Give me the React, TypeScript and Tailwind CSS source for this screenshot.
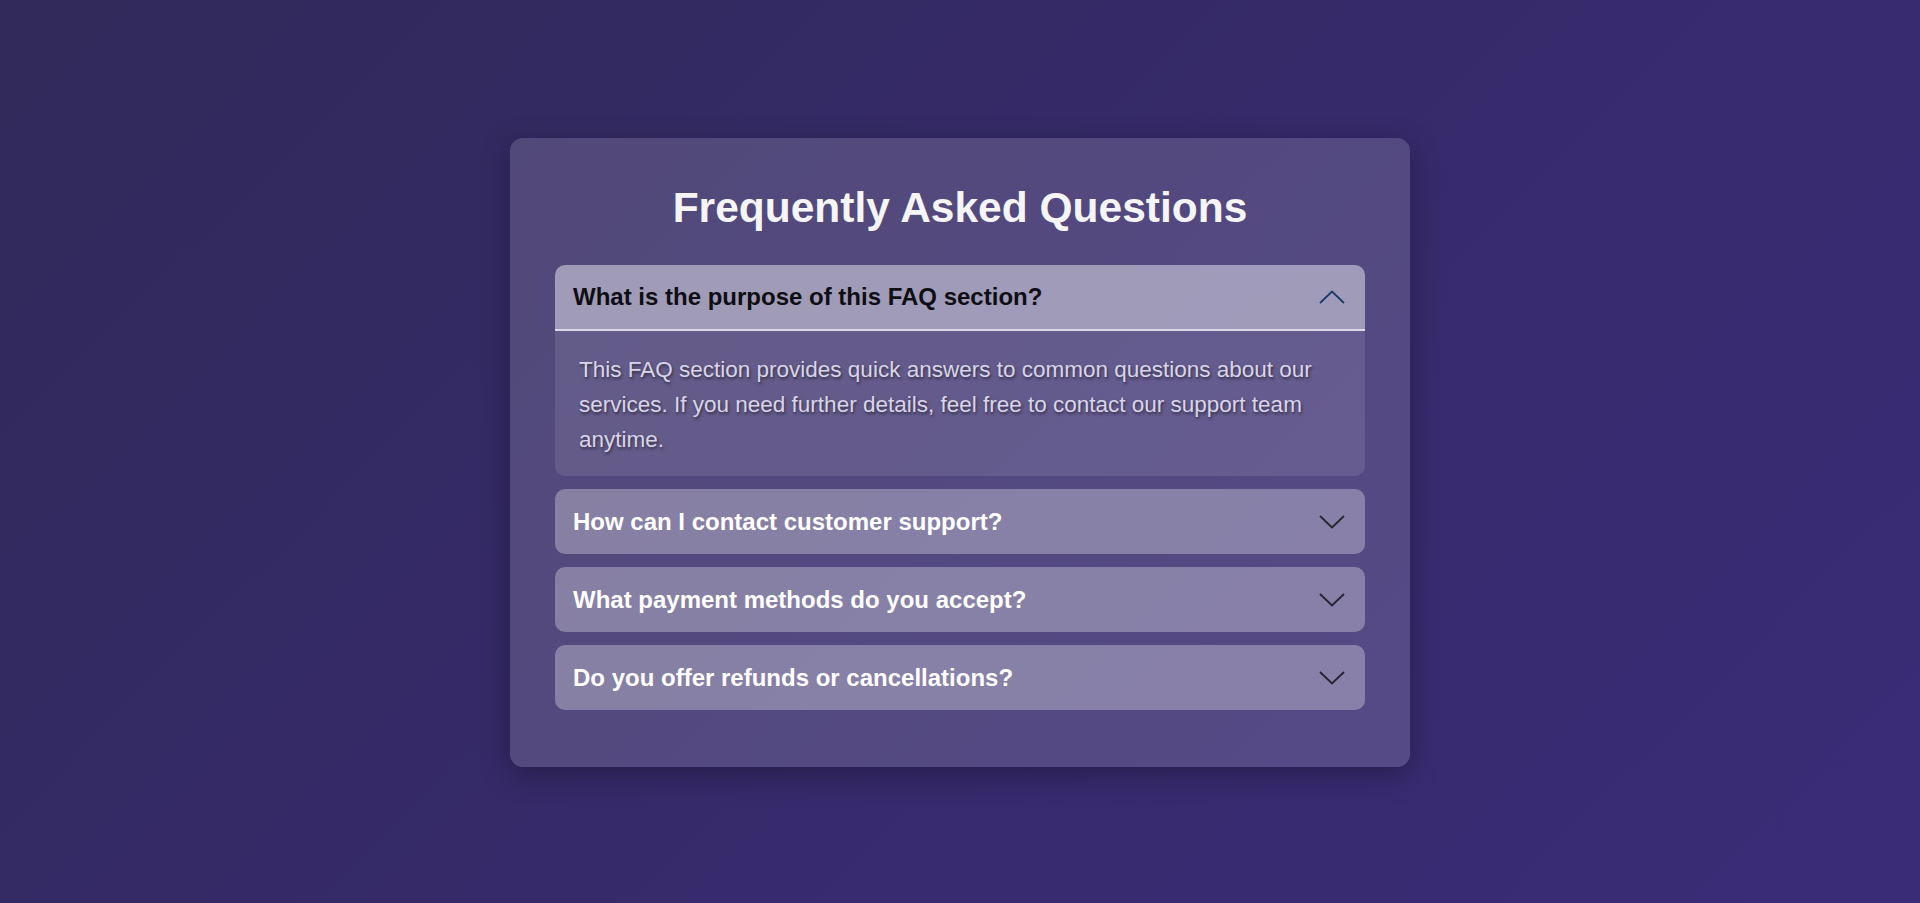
import React, { useState } from "react";

const faqs = [
  {
    q: "What is the purpose of this FAQ section?",
    a: "This FAQ section provides quick answers to common questions about our services. If you need further details, feel free to contact our support team anytime.",
  },
  {
    q: "How can I contact customer support?",
    a: "You can reach our customer support team via email or live chat, available 24/7 to help with any questions.",
  },
  {
    q: "What payment methods do you accept?",
    a: "We accept all major credit cards, PayPal, and bank transfers.",
  },
  {
    q: "Do you offer refunds or cancellations?",
    a: "Yes, refunds and cancellations are available within 30 days of purchase.",
  },
];

function Chevron({ up }: { up: boolean }) {
  return (
    <svg width="26" height="14" viewBox="0 0 26 14" fill="none" className="shrink-0">
      {up ? (
        <polyline points="1,13 13,1.5 25,13" stroke="#1d3a6a" strokeWidth="1.8" strokeLinejoin="miter" />
      ) : (
        <polyline points="1,1 13,12.5 25,1" stroke="#26262e" strokeWidth="1.9" strokeLinejoin="miter" />
      )}
    </svg>
  );
}

export default function App() {
  const [open, setOpen] = useState<number>(0);
  return (
    <div
      className="min-h-[903px] w-full flex items-center justify-center pt-[2px] bg-[linear-gradient(135deg,#312a5a_0%,#362a6a_50%,#3b2c78_100%)]"
      style={{ fontFamily: '"Liberation Sans", Arial, sans-serif' }}
    >
      <div className="w-[900px] rounded-[13px] bg-white/15 px-[45px] pt-[46px] pb-[44px] shadow-[0_8px_30px_rgba(0,0,0,0.3)]">
        <h2 className="mb-[34px] text-center text-[42.5px] font-bold leading-[47px] text-[#f5f5f7]">
          Frequently Asked Questions
        </h2>
        <div className="flex flex-col">
          {faqs.map((f, i) => {
            const isOpen = open === i;
            return (
              <div key={i} className="mb-[13px] overflow-hidden rounded-[10px]">
                <button
                  onClick={() => setOpen(isOpen ? -1 : i)}
                  className={
                    "flex w-full items-center justify-between pl-[18px] pr-[20px] text-left " +
                    (isOpen
                      ? "h-[66px] bg-white/45 text-[#0e0e14] border-b-2 border-[#dcd8e8]"
                      : "h-[65px] bg-white/30 text-white")
                  }
                >
                  <span className="text-[24px] font-bold leading-[28px]">{f.q}</span>
                  <Chevron up={isOpen} />
                </button>
                {isOpen && (
                  <div className="bg-white/10 px-[24px] pt-[21px] pb-[19px]">
                    <p className="text-[22.5px] leading-[35.2px] text-[#d9d5e8] [text-shadow:1px_2px_3px_rgba(0,0,0,0.5)]">
                      {f.a}
                    </p>
                  </div>
                )}
              </div>
            );
          })}
        </div>
      </div>
    </div>
  );
}
